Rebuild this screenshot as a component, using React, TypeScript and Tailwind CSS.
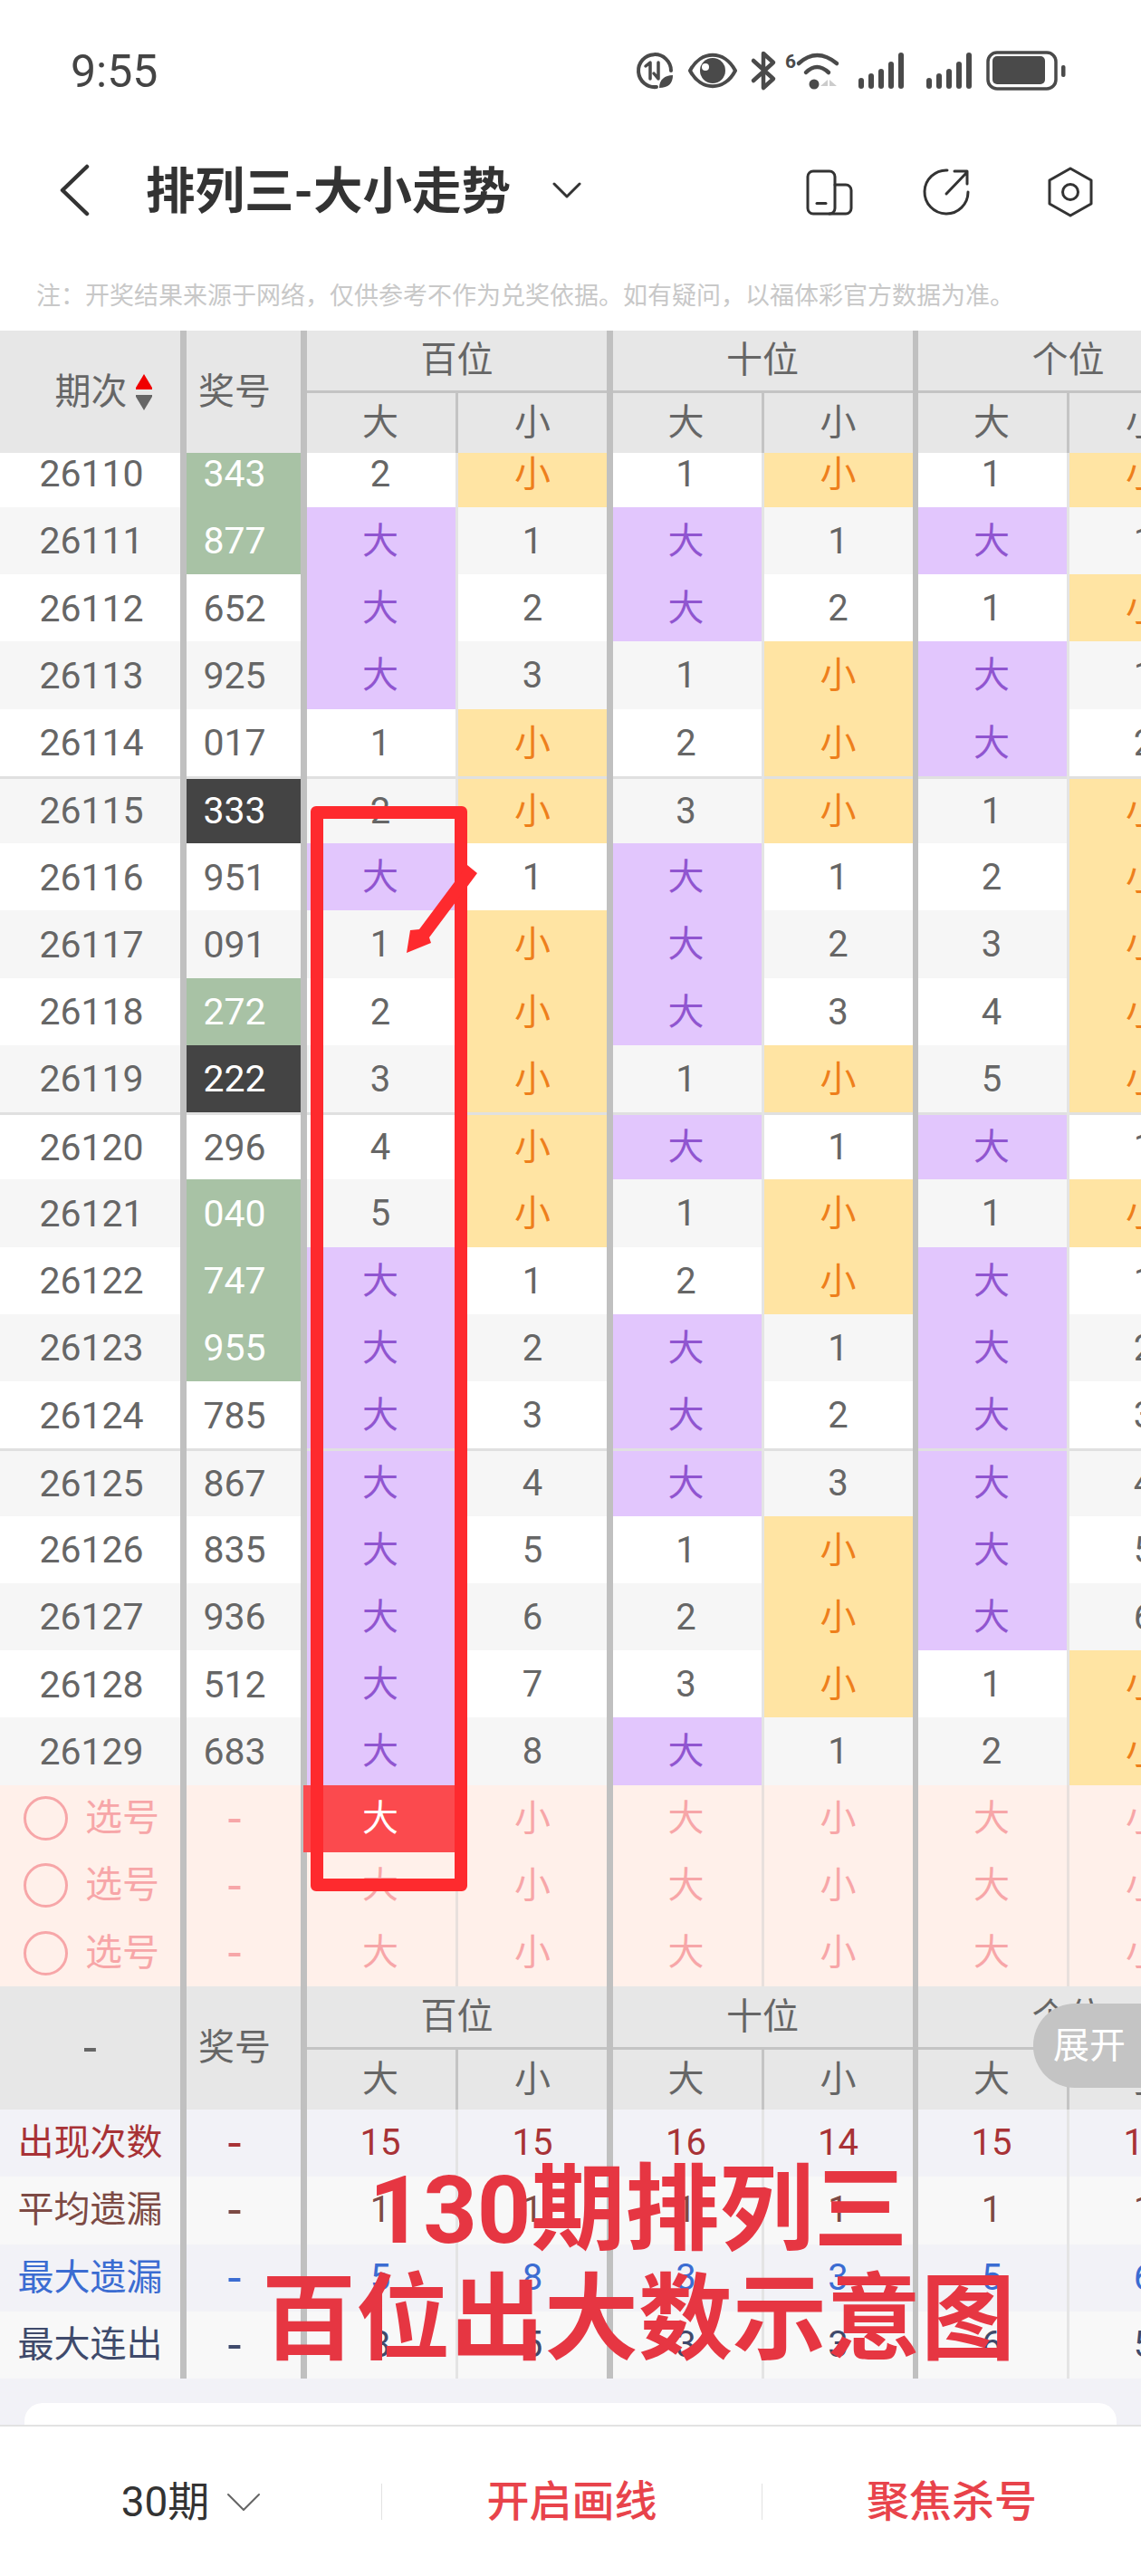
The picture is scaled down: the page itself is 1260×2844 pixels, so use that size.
import React from 'react';

type Row = { id: string; num: string; tone?: 'green' | 'dark'; cells: string[] };

const rows: Row[] = [
  { id: '26110', num: '343', tone: 'green', cells: ['2', '小', '1', '小', '1', '小'] },
  { id: '26111', num: '877', tone: 'green', cells: ['大', '1', '大', '1', '大', '1'] },
  { id: '26112', num: '652', cells: ['大', '2', '大', '2', '1', '小'] },
  { id: '26113', num: '925', cells: ['大', '3', '1', '小', '大', '1'] },
  { id: '26114', num: '017', cells: ['1', '小', '2', '小', '大', '2'] },
  { id: '26115', num: '333', tone: 'dark', cells: ['2', '小', '3', '小', '1', '小'] },
  { id: '26116', num: '951', cells: ['大', '1', '大', '1', '2', '小'] },
  { id: '26117', num: '091', cells: ['1', '小', '大', '2', '3', '小'] },
  { id: '26118', num: '272', tone: 'green', cells: ['2', '小', '大', '3', '4', '小'] },
  { id: '26119', num: '222', tone: 'dark', cells: ['3', '小', '1', '小', '5', '小'] },
  { id: '26120', num: '296', cells: ['4', '小', '大', '1', '大', '1'] },
  { id: '26121', num: '040', tone: 'green', cells: ['5', '小', '1', '小', '1', '小'] },
  { id: '26122', num: '747', tone: 'green', cells: ['大', '1', '2', '小', '大', '1'] },
  { id: '26123', num: '955', tone: 'green', cells: ['大', '2', '大', '1', '大', '2'] },
  { id: '26124', num: '785', cells: ['大', '3', '大', '2', '大', '3'] },
  { id: '26125', num: '867', cells: ['大', '4', '大', '3', '大', '4'] },
  { id: '26126', num: '835', cells: ['大', '5', '1', '小', '大', '5'] },
  { id: '26127', num: '936', cells: ['大', '6', '2', '小', '大', '6'] },
  { id: '26128', num: '512', cells: ['大', '7', '3', '小', '1', '小'] },
  { id: '26129', num: '683', cells: ['大', '8', '大', '1', '2', '小'] },
];

const stats = [
  { label: '出现次数', color: 'text-[#a83236]', bg: 'bg-[#f2f2f7]', values: ['15', '15', '16', '14', '15', '15'] },
  { label: '平均遗漏', color: 'text-[#7d4a44]', bg: 'bg-[#f8f8f8]', values: ['1', '1', '1', '1', '1', '1'] },
  { label: '最大遗漏', color: 'text-[#3b6cd2]', bg: 'bg-[#f2f2f7]', values: ['5', '8', '3', '3', '5', '6'] },
  { label: '最大连出', color: 'text-[#3f4a6b]', bg: 'bg-[#f8f8f8]', values: ['8', '5', '3', '3', '6', '5'] },
];

const Thick = () => <div className="w-[7px] shrink-0 bg-[#c0c0c0]" />;
const GroupGap = () => <div className="w-[6.5px] shrink-0 bg-[#c0c0c0]" />;
const Thin = ({ className = 'bg-[#e4e4e4]' }: { className?: string }) => (
  <div className={`w-[3px] shrink-0 ${className}`} />
);
const Dash = () => <span className="text-[54px] leading-none">-</span>;

// Top and bottom table headings share the same column structure
const GroupHeader = ({ title, tall }: { title: string; tall?: boolean }) => (
  <div className="flex w-[331px] shrink-0 flex-col">
    <div className={`flex items-center justify-center ${tall ? 'h-[67px]' : 'h-[66px]'}`}>{title}</div>
    <div className="h-[3px] bg-[#c4c4c4]" />
    <div className="flex flex-1">
      <div className="flex w-[164px] items-center justify-center pr-[2px]">大</div>
      <Thin className="bg-[#c4c4c4]" />
      <div className="flex w-[164px] items-center justify-center">小</div>
    </div>
  </div>
);

const TableHead = ({ first, tall }: { first: React.ReactNode; tall?: boolean }) => (
  <div className={`flex bg-[#e7e7e7] text-[#666666] ${tall ? 'h-[136px]' : 'h-[135px]'}`}>
    <div className="flex w-[199px] shrink-0 items-center justify-center">{first}</div>
    <Thick />
    <div className="flex w-[126px] shrink-0 items-center justify-center pr-[20px]">奖号</div>
    <Thick />
    <GroupHeader title="百位" tall={tall} />
    <GroupGap />
    <GroupHeader title="十位" tall={tall} />
    <GroupGap />
    <GroupHeader title="个位" tall={tall} />
  </div>
);

const Cell = ({ value, line, lead }: { value: string; line: boolean; lead?: boolean }) => {
  const tone =
    value === '大'
      ? 'bg-[#e2c6fd] text-[#9055d0]'
      : value === '小'
        ? 'bg-[#ffe4a3] text-[#ee7f1c]'
        : 'text-[#666666]';
  return (
    <div
      className={`flex w-[164px] shrink-0 items-center justify-center ${tone} ${lead ? 'pr-[2px]' : ''} ${line ? 'border-t-[3px] border-[#e0e0e0] pt-[1px]' : 'pt-[2px]'}`}
    >
      {value}
    </div>
  );
};

const DataRow = ({ row, index }: { row: Row; index: number }) => {
  const line = index % 5 === 0 && index > 0;
  const divider = line ? 'border-t-[3px] border-[#e0e0e0] pt-[1px]' : 'pt-[2px]';
  const numTone =
    row.tone === 'green'
      ? 'bg-[#a8c2a5] text-white'
      : row.tone === 'dark'
        ? 'bg-[#444444] text-white'
        : 'text-[#666666]';
  return (
    <div className={`flex h-[74.25px] ${index % 2 ? 'bg-[#f6f6f6]' : 'bg-white'}`}>
      <div className={`flex w-[199px] shrink-0 items-center justify-center pl-[3px] text-[41px] text-[#666666] ${divider}`}>
        {row.id}
      </div>
      <Thick />
      <div className={`flex w-[126px] shrink-0 items-center justify-center pr-[20px] text-[41px] ${numTone} ${divider}`}>
        {row.num}
      </div>
      {[0, 2, 4].map((start) => (
        <React.Fragment key={start}>
          {start === 0 ? <Thick /> : <GroupGap />}
          <Cell value={row.cells[start]} line={line} lead />
          <Thin />
          <Cell value={row.cells[start + 1]} line={line} />
        </React.Fragment>
      ))}
    </div>
  );
};

const PickRow = ({ active }: { active?: boolean }) => (
  <div className="flex h-[74.25px] bg-[#fff0ea] text-[#f7a6a8]">
    <div className="flex w-[199px] shrink-0 items-center gap-[19px] pl-[26px]">
      <span className="h-[49px] w-[49px] rounded-full border-[3px] border-[#f7a6a8]" />
      <span className="text-[41px]">选号</span>
    </div>
    <Thick />
    <div className="flex w-[126px] shrink-0 items-center justify-center pr-[20px]">
      <Dash />
    </div>
    {[0, 1, 2].map((group) => (
      <React.Fragment key={group}>
        {group === 0 ? <Thick /> : <GroupGap />}
        <div className="relative flex w-[164px] shrink-0 items-center justify-center pr-[2px]">
          {active && group === 0 && (
            <span className="absolute -left-[4px] inset-y-0 right-0 flex items-center justify-center bg-[#fb4a4e] pl-[2px] text-white">
              大
            </span>
          )}
          大
        </div>
        <Thin className="bg-[#e8e0dd]" />
        <div className="flex w-[164px] shrink-0 items-center justify-center">小</div>
      </React.Fragment>
    ))}
  </div>
);

const StatRow = ({ stat }: { stat: (typeof stats)[number] }) => (
  <div className={`flex h-[74.25px] ${stat.bg} ${stat.color}`}>
    <div className="flex w-[199px] shrink-0 items-center justify-center">{stat.label}</div>
    <Thick />
    <div className="flex w-[126px] shrink-0 items-center justify-center pr-[20px]">
      <Dash />
    </div>
    {[0, 2, 4].map((start) => (
      <React.Fragment key={start}>
        {start === 0 ? <Thick /> : <GroupGap />}
        <div className="flex w-[164px] shrink-0 items-center justify-center pr-[2px]">{stat.values[start]}</div>
        <Thin />
        <div className="flex w-[164px] shrink-0 items-center justify-center">{stat.values[start + 1]}</div>
      </React.Fragment>
    ))}
  </div>
);

const StatusIcons = () => (
  <svg width="500" height="70" viewBox="0 0 500 70" fill="none" stroke="#4a4a4a" strokeLinecap="round" strokeLinejoin="round">
    {/* data saver */}
    <path d="M51 33A18 18 0 1 0 35 51" strokeWidth="4" />
    <path d="M23 28l5-4v18" strokeWidth="3.5" />
    <path d="M37 24v18l-5-6" strokeWidth="3.5" />
    <path d="M38 52c0-9 6-14 15-14 0 9-5 14-15 14z" fill="#4a4a4a" stroke="none" />
    {/* eye comfort */}
    <path d="M72 33C84 10 110 10 122 33 110 56 84 56 72 33z" strokeWidth="4" />
    <circle cx="97" cy="33" r="14" fill="#4a4a4a" stroke="none" />
    <circle cx="89" cy="29" r="4" fill="#fff" stroke="none" />
    {/* bluetooth */}
    <path d="M142 22L164 42 153 52V14L164 24 142 44" strokeWidth="4.5" />
    {/* wifi */}
    <text x="177" y="30" fontSize="21" fontWeight="700" fill="#4a4a4a" stroke="none">6</text>
    <path d="M192 25Q212 7 234 25" strokeWidth="4.5" />
    <path d="M200 35Q212 23 225 35" strokeWidth="4.5" />
    <circle cx="209" cy="48" r="5.5" fill="#4a4a4a" stroke="none" />
    <path d="M216 50l8-7v7zM226 43l8 7h-8z" fill="#cccccc" stroke="none" />
    {/* signal bars */}
    {[0, 75].map((dx) => (
      <g key={dx} strokeWidth="6">
        <path d={`M${261 + dx} 50V44`} />
        <path d={`M${272 + dx} 50V39`} />
        <path d={`M${283 + dx} 50V34`} />
        <path d={`M${294 + dx} 50V26`} />
        <path d={`M${305 + dx} 50V16`} />
      </g>
    ))}
    {/* battery */}
    <rect x="401" y="13" width="75" height="40" rx="10" strokeWidth="3.5" />
    <rect x="406" y="17" width="58" height="31" rx="5" fill="#4a4a4a" stroke="none" />
    <rect x="482" y="27" width="4.5" height="13" rx="2" fill="#4a4a4a" stroke="none" />
  </svg>
);

const NavIcons = () => (
  <svg width="360" height="90" viewBox="0 0 360 90" fill="none" stroke="#333333" strokeWidth="3" strokeLinecap="round" strokeLinejoin="round">
    <rect x="32" y="24" width="30" height="47" rx="6" />
    <path d="M62 39h12a6 6 0 0 1 6 6v20a6 6 0 0 1-6 6H56" />
    <path d="M42 59.5h10" />
    <path d="M186 23A24 24 0 1 0 209 47" />
    <path d="M185 49L208 25M194 24h14v14" />
    <path d="M322 21l23 13v26l-23 13-23-13V34z" />
    <circle cx="322" cy="47" r="8.5" />
  </svg>
);

export default function App() {
  return (
    <div className="relative h-[2844px] w-[1260px] overflow-hidden bg-white font-['Roboto','Noto_Sans_CJK_SC',sans-serif] text-[40px] leading-none">
      {/* Status bar */}
      <div className="flex h-[156px] justify-between pl-[78px] pr-[70px]">
        <span className="mt-[54px] text-[50px] leading-[50px] text-[#444444]">9:55</span>
        <div className="mt-[45px]">
          <StatusIcons />
        </div>
      </div>

      {/* Title bar */}
      <div className="flex h-[108px] items-center pl-[66px] pr-[40px]">
        <svg width="34" height="58" viewBox="0 0 34 58" fill="none" stroke="#333333" strokeWidth="4.5" strokeLinecap="round" strokeLinejoin="round">
          <path d="M30 3L3 29l27 26" />
        </svg>
        <h1 className="ml-[61px] mt-[2px] text-[54.5px] font-bold text-[#333333]">排列三-大小走势</h1>
        <svg className="ml-[46px]" width="32" height="18" viewBox="0 0 32 18" fill="none" stroke="#333333" strokeWidth="3" strokeLinecap="round" strokeLinejoin="round">
          <path d="M2 2l14 14L30 2" />
        </svg>
        <div className="ml-auto self-start pt-[9px]">
          <NavIcons />
        </div>
      </div>

      {/* Disclaimer */}
      <div className="h-[101px] pl-[40px] pt-[50px] text-[27px] leading-[27px] text-[#c8c8c8]">
        注：开奖结果来源于网络，仅供参考不作为兑奖依据。如有疑问，以福体彩官方数据为准。
      </div>

      {/* Trend table */}
      <TableHead
        first={
          <div className="flex items-center gap-[8px] pl-[30px]">
            <span>期次</span>
            <svg width="20" height="40" viewBox="0 0 20 40">
              <path d="M10 0l9 15v2H1v-2z" fill="#f00000" />
              <path d="M1 23h18v2L10 40 1 25z" fill="#666666" />
            </svg>
          </div>
        }
      />
      <div className="h-[1693px] overflow-hidden">
        <div className="-mt-[14.5px]">
          {rows.map((row, index) => (
            <DataRow key={row.id} row={row} index={index} />
          ))}
          <PickRow active />
          <PickRow />
          <PickRow />
        </div>
      </div>
      <TableHead first={<Dash />} tall />
      {stats.map((stat) => (
        <StatRow key={stat.label} stat={stat} />
      ))}

      {/* Grey gap with the top edge of the next card */}
      <div className="h-[51px] bg-[#f2f2f7] px-[27px] pt-[27px]">
        <div className="h-[24px] rounded-t-[20px] bg-white" />
      </div>

      {/* Bottom action bar */}
      <div className="flex h-[167px] items-center border-t-[2px] border-[#e2e2e2] bg-white text-[47px] font-medium text-[#e8434b]">
        <div className="flex w-[421px] items-center justify-center gap-[20px] text-[#333333]">
          <span className="text-[46px] font-normal">30期</span>
          <svg width="36" height="20" viewBox="0 0 36 20" fill="none" stroke="#666666" strokeWidth="2" strokeLinecap="round" strokeLinejoin="round">
            <path d="M1 2l17 17L35 2" />
          </svg>
        </div>
        <div className="h-[40px] w-[1px] bg-[#e2e2e2]" />
        <div className="flex w-[419px] justify-center">开启画线</div>
        <div className="h-[40px] w-[1px] bg-[#e2e2e2]" />
        <div className="flex flex-1 justify-center">聚焦杀号</div>
      </div>

      {/* Expand handle floating over the lower heading */}
      <div className="absolute left-[1141px] top-[2212px] flex h-[93px] w-[119px] items-center rounded-l-[46px] bg-[#c4c4c4] pl-[22px] text-white">
        展开
      </div>

      {/* Hand-drawn annotation: box around the 百位 column and an arrow */}
      <div className="absolute left-[343px] top-[890px] h-[1198px] w-[173px] rounded-[6px] border-[14px] border-[#fe2a2e]" />
      <svg className="absolute left-[440px] top-[945px]" width="95" height="115" viewBox="0 0 95 115">
        <path d="M76 10L87 19 34 90 36 96 9 107 13 82 23 81z" fill="#fe2a2e" />
      </svg>

      {/* Caption laid over the statistics */}
      <div className="absolute left-[150px] top-[2380px] w-[1110px] text-center text-[104px] font-bold leading-[121px] text-[#e63642]">
        <div>130期排列三</div>
        <div>百位出大数示意图</div>
      </div>
    </div>
  );
}
